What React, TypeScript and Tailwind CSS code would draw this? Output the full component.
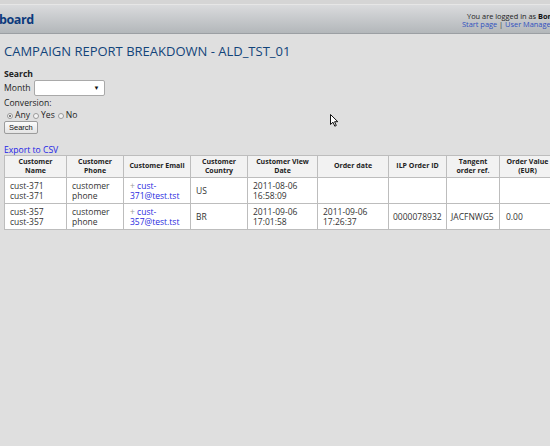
import React from "react";

type Row = {
  name: [string, string];
  phone: [string, string];
  email: [string, string];
  country: string;
  viewDate: [string, string];
  orderDate?: [string, string];
  orderId?: string;
  tangentRef?: string;
  value?: string;
};

const rows: Row[] = [
  {
    name: ["cust-371", "cust-371"],
    phone: ["customer", "phone"],
    email: ["cust-", "371@test.tst"],
    country: "US",
    viewDate: ["2011-08-06", "16:58:09"],
  },
  {
    name: ["cust-357", "cust-357"],
    phone: ["customer", "phone"],
    email: ["cust-", "357@test.tst"],
    country: "BR",
    viewDate: ["2011-09-06", "17:01:58"],
    orderDate: ["2011-09-06", "17:26:37"],
    orderId: "0000078932",
    tangentRef: "JACFNWG5",
    value: "0.00",
  },
];

const headers: [string, string?][] = [
  ["Customer", "Name"],
  ["Customer", "Phone"],
  ["Customer Email"],
  ["Customer", "Country"],
  ["Customer View", "Date"],
  ["Order date"],
  ["ILP Order ID"],
  ["Tangent", "order ref."],
  ["Order Value", "(EUR)"],
];

const colWidths = [62, 57, 67, 57, 70, 71, 58, 53, 56];

function Radio({ checked, label }: { checked?: boolean; label: string }) {
  return (
    <span className="flex items-center gap-[2px]">
      <span className="flex h-[6px] w-[6px] items-center justify-center rounded-full border border-[#9a9a9a] bg-[#f4f4f4]">
        {checked && <span className="h-[2px] w-[2px] rounded-full bg-[#555]" />}
      </span>
      <span>{label}</span>
    </span>
  );
}

function Lines({ value }: { value?: [string, string] }) {
  if (!value) return null;
  return (
    <>
      {value[0]}
      <br />
      {value[1]}
    </>
  );
}

export default function App() {
  return (
    <div
      className="relative h-[446px] w-[550px] overflow-hidden bg-[#dfdfdf] text-[#222]"
      style={{ fontFamily: '"Open Sans", "Noto Sans", sans-serif' }}
    >
      {/* top bar */}
      <div className="h-[5px] border-b border-[#e6e6e6] bg-[#d5d5d5]" />
      <div className="flex h-[29px] w-[600px] items-center border-b border-[#9b9fa3] bg-gradient-to-b from-[#dadbdd] to-[#b3b7ba]">
        <div className="-ml-[1px] mt-[2px] w-[463px] shrink-0 text-[12.5px] font-bold tracking-[-0.4px] text-[#0c3a7c]">
          board
        </div>
        <div className="mt-[1px] shrink-0 whitespace-nowrap text-left text-[7.4px] leading-[8px]">
          <div className="pl-[5px] text-[#222]">
            You are logged in as <span className="font-bold text-[#111]">Bond</span>
          </div>
          <div className="text-[#3050c0]">
            Start page <span className="text-[#333]">|</span> User Management
          </div>
        </div>
      </div>

      <div className="px-[4px]">
        <h1 className="mt-[8px] text-[13px] leading-[18px] text-[#12447a]">
          CAMPAIGN REPORT BREAKDOWN - ALD_TST_01
        </h1>

        <div className="mt-[9px] text-[8.6px] leading-[11px] text-[#222]">
          <div className="font-bold">Search</div>
          <div className="flex items-center gap-[3px]">
            <span>Month</span>
            <div className="flex h-[16px] w-[71px] items-center justify-end rounded-[2px] border border-[#a9a9a9] bg-white pr-[4px]">
              <span className="text-[6px] leading-none text-[#111]">▼</span>
            </div>
          </div>
          <div className="mt-[2px]">Conversion:</div>
          <div className="mt-[1px] flex items-center gap-[3px] pl-[3px]">
            <Radio checked label="Any" />
            <Radio label="Yes" />
            <Radio label="No" />
          </div>
          <button
            className="flex h-[13px] items-center rounded-[2px] border border-[#9c9c9c] bg-gradient-to-b from-[#fbfbfb] to-[#e4e4e4] px-[4px] text-[7.5px] leading-none text-[#111]"
            style={{ fontFamily: '"Liberation Sans", Arial, sans-serif' }}
          >
            Search
          </button>
        </div>

        <a className="mt-[11px] block text-[8.6px] leading-[10px] text-[#2424e6]">Export to CSV</a>

        <table className="w-[551px] table-fixed border-collapse border border-[#a5a5a5] text-[8.5px] leading-[10px]">
          <colgroup>
            {colWidths.map((w, i) => (
              <col key={i} style={{ width: w }} />
            ))}
          </colgroup>
          <thead>
            <tr className="h-[22px] bg-[#f2f2f2]">
              {headers.map(([a, b], i) => (
                <th
                  key={i}
                  className="border border-[#bdbdbd] px-[2px] text-center text-[7px] font-bold leading-[8.5px] text-[#222]"
                >
                  {a}
                  {b && (
                    <>
                      <br />
                      {b}
                    </>
                  )}
                </th>
              ))}
            </tr>
          </thead>
          <tbody className="bg-white text-[#333]">
            {rows.map((r, i) => (
              <tr key={i} className="h-[26px]">
                <td className="border border-[#bdbdbd] px-[5px] align-middle">
                  <Lines value={r.name} />
                </td>
                <td className="border border-[#bdbdbd] px-[5px] align-middle">
                  <Lines value={r.phone} />
                </td>
                <td className="border border-[#bdbdbd] px-[6px] align-middle">
                  <span className="text-[#999]">+</span>{" "}
                  <span className="text-[#2a2ae0]">
                    {r.email[0]}
                    <br />
                    {r.email[1]}
                  </span>
                </td>
                <td className="border border-[#bdbdbd] px-[5px] align-middle">{r.country}</td>
                <td className="border border-[#bdbdbd] px-[5px] align-middle">
                  <Lines value={r.viewDate} />
                </td>
                <td className="border border-[#bdbdbd] px-[5px] align-middle">
                  <Lines value={r.orderDate} />
                </td>
                <td className="border border-[#bdbdbd] px-[4px] align-middle">{r.orderId}</td>
                <td className="border border-[#bdbdbd] px-[4px] align-middle">{r.tangentRef}</td>
                <td className="border border-[#bdbdbd] px-[6px] align-middle">{r.value}</td>
              </tr>
            ))}
          </tbody>
        </table>
      </div>

      {/* mouse pointer */}
      <svg className="absolute left-[330px] top-[114px]" width="9" height="13" viewBox="0 0 9 13">
        <path
          d="M0.5 0.5 L0.5 10.5 L3 8.2 L4.8 12.2 L6.3 11.5 L4.6 7.7 L7.8 7.7 Z"
          fill="#fff"
          stroke="#111"
          strokeWidth="1"
          strokeLinejoin="round"
        />
      </svg>
    </div>
  );
}
